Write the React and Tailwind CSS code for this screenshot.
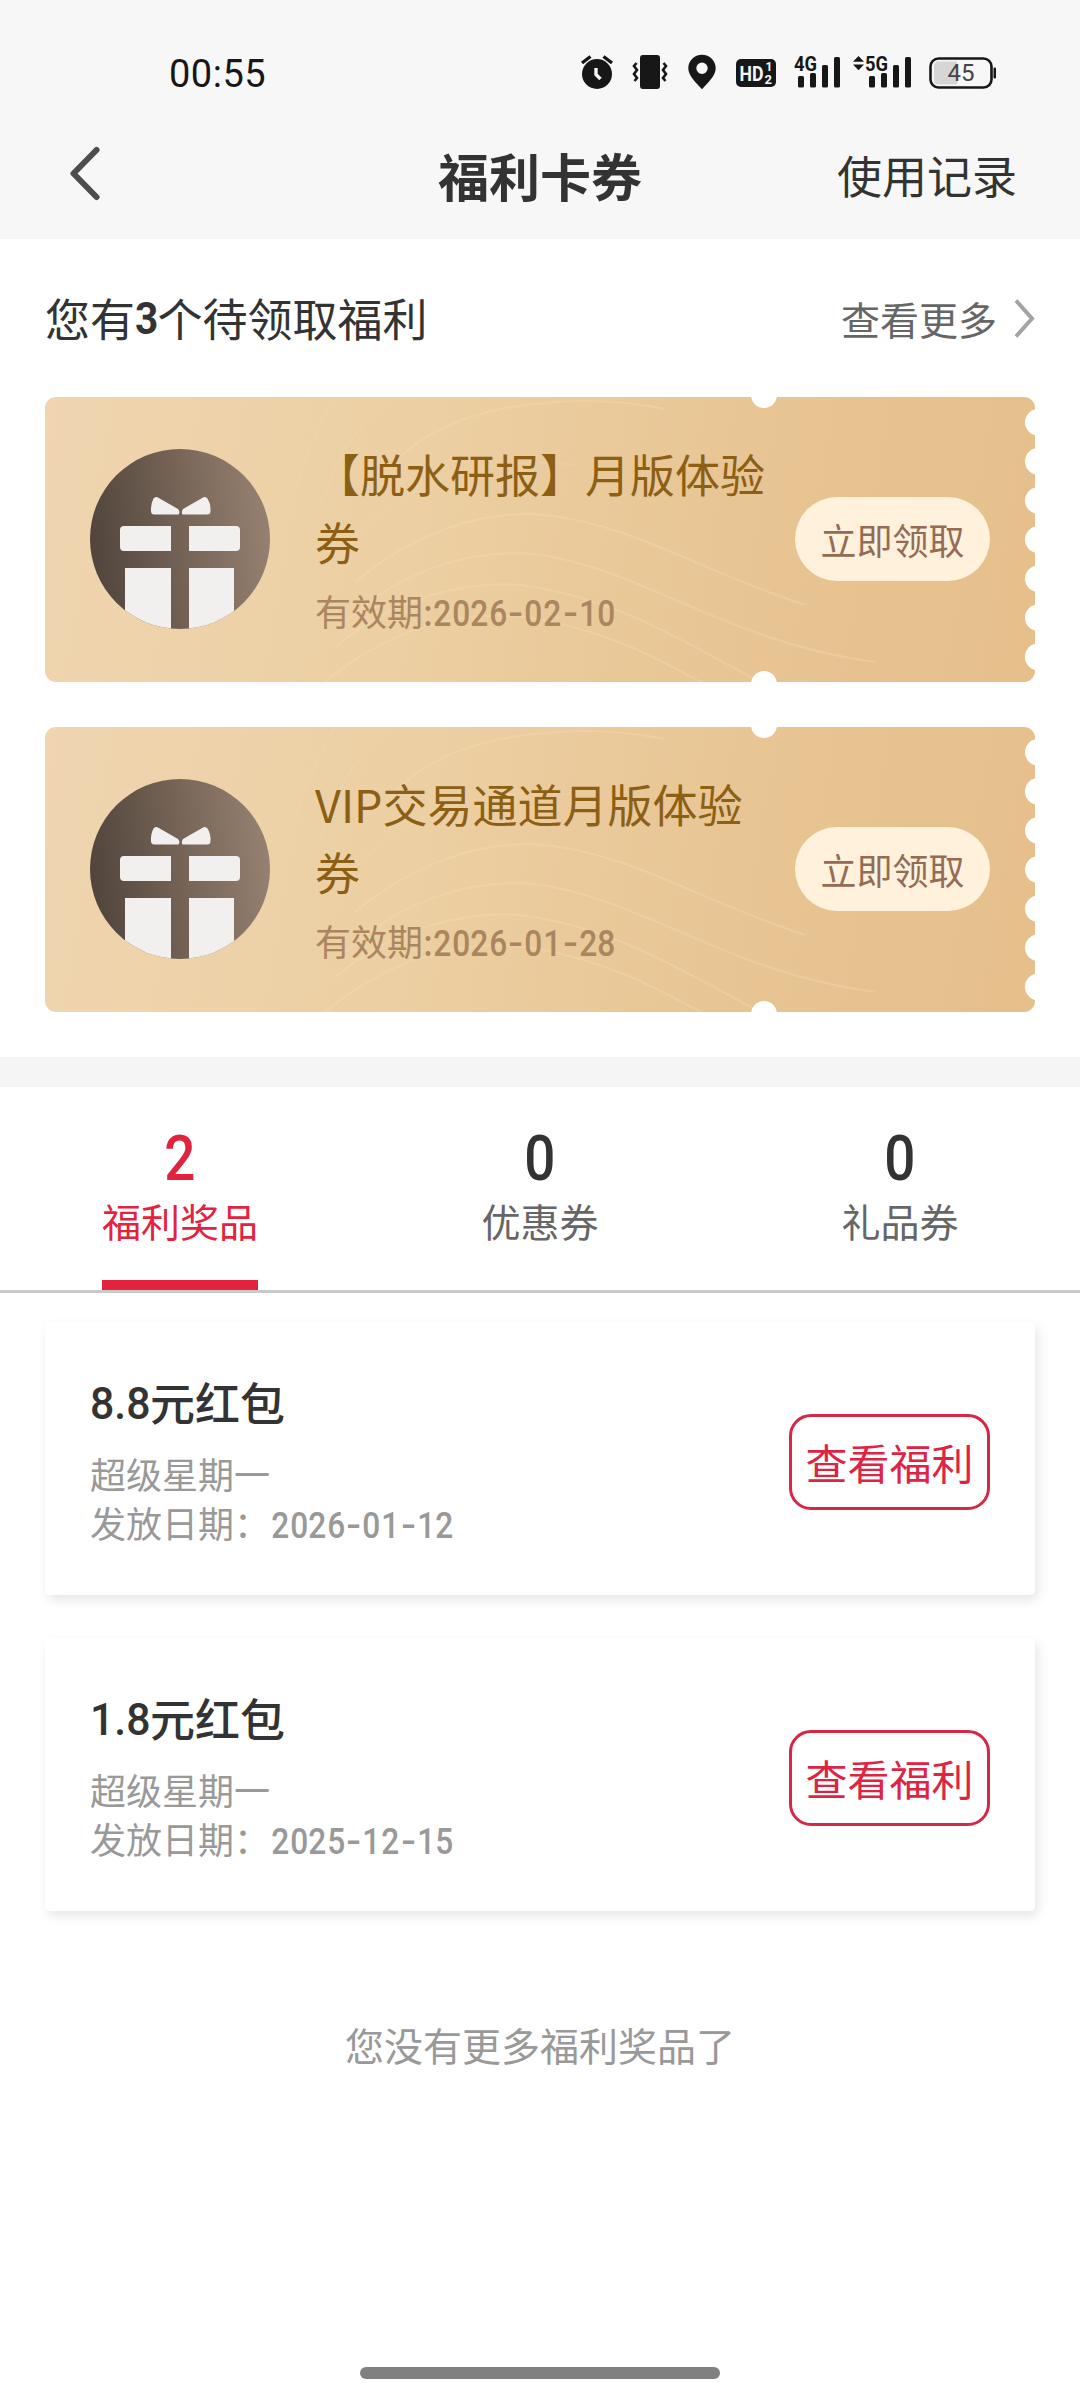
import React from "react";

const DIGITS = "inline-block font-['Roboto']";

/* Numeric date set in narrow figures with wide dashes */
function DateText({ value }) {
  return (
    <span className="inline-flex h-[1em] items-baseline font-['Roboto'] font-medium">
      {value.split("").map((c, i) => (
        <span
          key={i}
          className={
            c === "-"
              ? "flex w-[17px] scale-x-[1.2] justify-center"
              : "flex w-[18.6px] scale-x-[0.88] justify-center"
          }
        >
          {c}
        </span>
      ))}
    </span>
  );
}

function Signal({ label, arrows }) {
  return (
    <svg className="overflow-visible" width={arrows ? 62 : 48} height="36" viewBox={arrows ? "-14 0 62 36" : "0 0 48 36"} fill="#171717">
      {arrows && <path d="M-12 7.800L-6.500 2L-1 7.800ZM-12 10.500L-6.500 16.300L-1 10.500Z" />}
      <text x="0" y="16.500" fontFamily="Roboto" fontWeight="700" fontSize="20.500" textLength="23" lengthAdjust="spacingAndGlyphs">
        {label}
      </text>
      <rect x="4" y="22" width="6" height="11.500" rx="1.500" />
      <rect x="16" y="19" width="6" height="14.500" rx="1.500" />
      <rect x="28" y="11" width="6" height="22.500" rx="1.500" />
      <rect x="40" y="3" width="6" height="30.500" rx="1.500" />
    </svg>
  );
}

function StatusBar() {
  return (
    <div className="flex h-[110px] items-start pt-[54px] pl-[169px] text-[#171717]">
      <div className="h-[38px] w-[411px] pt-[1px] font-['Roboto'] text-[38px] leading-[38px] tracking-[0.5px]">00:55</div>
      <div className="flex">
        <svg className="mr-[18px]" width="34" height="36" viewBox="0 0 34 36" fill="#171717">
          <circle cx="17" cy="20" r="15" />
          <path d="M2 9L10.500 2.500M32 9L23.500 2.500" stroke="#171717" strokeWidth="3.400" fill="none" />
          <path d="M16 14V20.500L20.500 25" stroke="#f7f7f7" strokeWidth="3.400" fill="none" />
        </svg>
        <svg className="mr-[20px]" width="36" height="36" viewBox="0 0 36 36" fill="#171717">
          <rect x="8" y="1" width="20" height="34" rx="3" />
          <path d="M4.500 9L2 12L5 16L2 20L5 24L2.500 27M31.500 9L34 12L31 16L34 20L31 24L33.500 27" stroke="#171717" strokeWidth="2.600" fill="none" />
        </svg>
        <svg className="mr-[20px]" width="28" height="36" viewBox="0 0 28 36" fill="#171717">
          <path fillRule="evenodd" d="M14 .8C6.300.8.300 6.800.300 14.300C.300 22 8 28.500 14 35.200C20 28.500 27.700 22 27.700 14.300C27.700 6.800 21.700.8 14 .8ZM14 8.500a5.700 5.700 0 1 1 0 11.400a5.700 5.700 0 0 1 0-11.400Z" />
        </svg>
        <svg className="mr-[18px]" width="40" height="36" viewBox="0 0 40 36" fill="#171717">
          <rect y="5" width="40" height="28" rx="5" />
          <g fill="#f7f7f7" fontFamily="Roboto" fontWeight="700">
            <text x="3.500" y="26.500" fontSize="20.500" textLength="24" lengthAdjust="spacingAndGlyphs">HD</text>
            <text x="29.500" y="17" fontSize="12">1</text>
            <text x="28.500" y="30" fontSize="13">2</text>
          </g>
        </svg>
        <Signal label="4G" />
        <span className="w-[9px]" />
        <Signal label="5G" arrows />
        <svg className="ml-[16px]" width="68" height="36" viewBox="0 0 68 36">
          <rect x="1.500" y="4.500" width="61" height="29" rx="8" fill="none" stroke="#171717" strokeWidth="2.600" />
          <path d="M9 7.500H28V30.500H9Q5 30.500 5 26V12Q5 7.500 9 7.500Z" fill="#d6d6d6" />
          <rect x="64.500" y="13.500" width="2.500" height="11" rx="1" fill="#171717" />
          <text x="18.500" y="27.300" fontFamily="Roboto" fontSize="24" fill="#444" textLength="27">45</text>
        </svg>
      </div>
    </div>
  );
}

function TitleBar() {
  return (
    <div className="grid h-[129px] grid-cols-3 items-center text-[#333]">
      <svg className="ml-[66px]" width="40" height="60" viewBox="0 0 40 60" fill="none" stroke="#4d4d4d" strokeWidth="6" strokeLinecap="round" strokeLinejoin="round">
        <path d="M30.500 5L7.500 28.500L30.500 52" />
      </svg>
      <h1 className="text-center text-[51px] leading-[60px] font-bold">福利卡券</h1>
      <div className="pr-[63px] text-right text-[45px] leading-[60px]">使用记录</div>
    </div>
  );
}

function Gift({ id }) {
  return (
    <svg width="180" height="180" viewBox="0 0 180 180">
      <defs>
        <linearGradient id={id} x1="0" y1=".56" x2="1" y2=".44">
          <stop offset="0" stopColor="#50443c" />
          <stop offset=".5" stopColor="#746355" />
          <stop offset="1" stopColor="#968171" />
        </linearGradient>
        <clipPath id={id + "c"}>
          <circle cx="90" cy="90" r="90" />
        </clipPath>
      </defs>
      <g clipPath={`url(#${id}c)`}>
        <rect width="180" height="180" fill={`url(#${id})`} />
        <g fill="#f1f0ef">
          <path d="M67.500 48.200L88 60Q90.500 63 88.500 65.500H64.500Q61 65.500 61 62Q60.500 55 63.500 49.500Q65 47.300 67.500 48.200Z" />
          <path d="M113.500 48.200L93 60Q91 63 92.500 65.500H117Q120.500 65.500 120.500 62Q121 55 117.500 49.500Q116 47.300 113.500 48.200Z" />
          <path d="M34 77H81V102H34Q30 102 30 98V81Q30 77 34 77ZM99 77H146Q150 77 150 81V98Q150 102 146 102H99Z" />
          <path d="M35 119H81V180H35ZM99 119H144V180H99Z" />
        </g>
      </g>
    </svg>
  );
}

function Coupon({ id, title, date }) {
  return (
    <div className="relative flex h-[285px] items-center overflow-hidden rounded-[11px] bg-[linear-gradient(100deg,#efd5b0_0%,#eccfa2_38%,#e8c594_68%,#e6bf8b_100%)] px-[45px] pb-[1px]">
      <svg className="absolute inset-0" width="990" height="285" viewBox="0 0 990 285" fill="none">
        <g stroke="#fae6c4" strokeOpacity=".22" strokeWidth="2.200">
          <path d="M250 95C262 55 275 25 290 0M275 110C290 65 310 30 345 0" strokeOpacity=".12" />
          <path d="M345 70C385 25 450 5 540 4C570 4 595 7 620 12" />
          <path d="M310 140C370 80 450 58 530 68" strokeOpacity=".12" />
          <path d="M310 185C370 135 440 112 500 118C590 128 650 172 760 208" />
          <path d="M300 225C360 170 430 152 490 157C600 172 680 245 830 265" />
          <path d="M290 250C350 200 420 184 475 188C570 200 640 245 715 285" />
          <path d="M280 285C340 235 410 212 480 220C560 232 610 260 665 290" />
        </g>
        <g fill="#fff">
          <circle cx="719" cy="-2" r="13" />
          <circle cx="719" cy="287" r="13" />
          {[0, 1, 2, 3, 4, 5, 6].map((i) => (
            <circle key={i} cx="993.500" cy={25.300 + i * 39.100} r="13.500" />
          ))}
        </g>
      </svg>
      <div className="relative flex flex-1 items-center">
        <Gift id={id} />
        <div className="ml-[45px] w-[454px] pb-[1px]">
          <div className="text-[45px] leading-[68px] text-[#8c6014]">{title}</div>
          <div className="mt-[7px] text-[36px] leading-[54px] whitespace-nowrap text-[#ab8560]">
            有效期:<DateText value={date} />
          </div>
        </div>
        <button className="ml-auto h-[84px] w-[195px] rounded-full bg-[#fff1db] text-[36px] leading-[82px] text-[#946c56]">
          立即领取
        </button>
      </div>
    </div>
  );
}

function Tab({ count, label, active }) {
  return (
    <div className={active ? "flex flex-col items-center text-[#e2233e]" : "flex flex-col items-center text-[#666]"}>
      <div
        className={
          active
            ? "mt-[35px] scale-x-[0.87] font-['Roboto'] text-[63px] leading-[74px] font-medium"
            : "mt-[35px] scale-x-[0.87] font-['Roboto'] text-[63px] leading-[74px] font-medium text-[#333]"
        }
      >
        {count}
      </div>
      <div className="text-[39px] leading-[48px]">{label}</div>
      {active && <div className="mt-[36px] h-[10px] w-[156px] bg-[#e2233e]" />}
    </div>
  );
}

function Reward({ amount, date }) {
  return (
    <div className="flex h-[273px] items-center justify-between rounded-[5px] bg-white px-[45px] shadow-[3px_5px_12px_rgba(0,0,0,0.1)]">
      <div>
        <div className="flex h-[64px] items-center text-[45px] leading-[64px] font-medium text-[#333]">
          <span className={DIGITS + " w-[60px] origin-left scale-x-[0.95] pt-[3px]"}>{amount}</span>
          元红包
        </div>
        <div className="mt-[15px] text-[36px] leading-[49px] text-[#999]">超级星期一</div>
        <div className="text-[36px] leading-[49px] whitespace-nowrap text-[#999]">
          发放日期：<span className="ml-[1px]"><DateText value={date} /></span>
        </div>
      </div>
      <button className="mt-[6px] h-[96px] w-[201px] rounded-[22px] border-[3px] border-[#d62746] text-[42px] leading-[90px] text-[#dd2443]">
        查看福利
      </button>
    </div>
  );
}

export default function App() {
  return (
    <div className="flex h-[2400px] w-[1080px] flex-col bg-white font-['Noto_Sans_CJK_SC','Roboto',sans-serif]">
      <header className="h-[239px] bg-[#f7f7f7]">
        <StatusBar />
        <TitleBar />
      </header>

      <section className="px-[45px] pb-[45px]">
        <div className="flex h-[158px] items-center">
          <div className="flex flex-1 items-center text-[45px] leading-[60px] text-[#333]">
            您有
            <span className={DIGITS + " w-[22.5px] origin-left scale-x-[0.9] pt-[2px] font-bold"}>3</span>
            个待领取福利
          </div>
          <div className="text-[39px] leading-[60px] text-[#666]">查看更多</div>
          <svg className="ml-[14px]" width="24" height="44" viewBox="0 0 24 44" fill="none" stroke="#a3a3a3" strokeWidth="4">
            <path d="M5 4.500L21 22.500L5 40.500" />
          </svg>
        </div>
        <div className="flex flex-col gap-[45px]">
          <Coupon id="giftA" title="【脱水研报】月版体验券" date="2026-02-10" />
          <Coupon id="giftB" title="VIP交易通道月版体验券" date="2026-01-28" />
        </div>
      </section>

      <div className="h-[30px] bg-[#f5f5f5]" />

      <nav className="grid h-[206px] grid-cols-3 border-b-[3px] border-[#c9c9c9]">
        <Tab count="2" label="福利奖品" active />
        <Tab count="0" label="优惠券" />
        <Tab count="0" label="礼品券" />
      </nav>

      <section className="flex flex-col gap-[43px] px-[45px] pt-[29px]">
        <Reward amount="8.8" date="2026-01-12" />
        <Reward amount="1.8" date="2025-12-15" />
      </section>

      <p className="mt-[104px] text-center text-[39px] leading-[58px] text-[#999]">您没有更多福利奖品了</p>

      <div className="mt-auto mb-[21px] h-[12px] w-[360px] self-center rounded-full bg-[#808080]" />
    </div>
  );
}
